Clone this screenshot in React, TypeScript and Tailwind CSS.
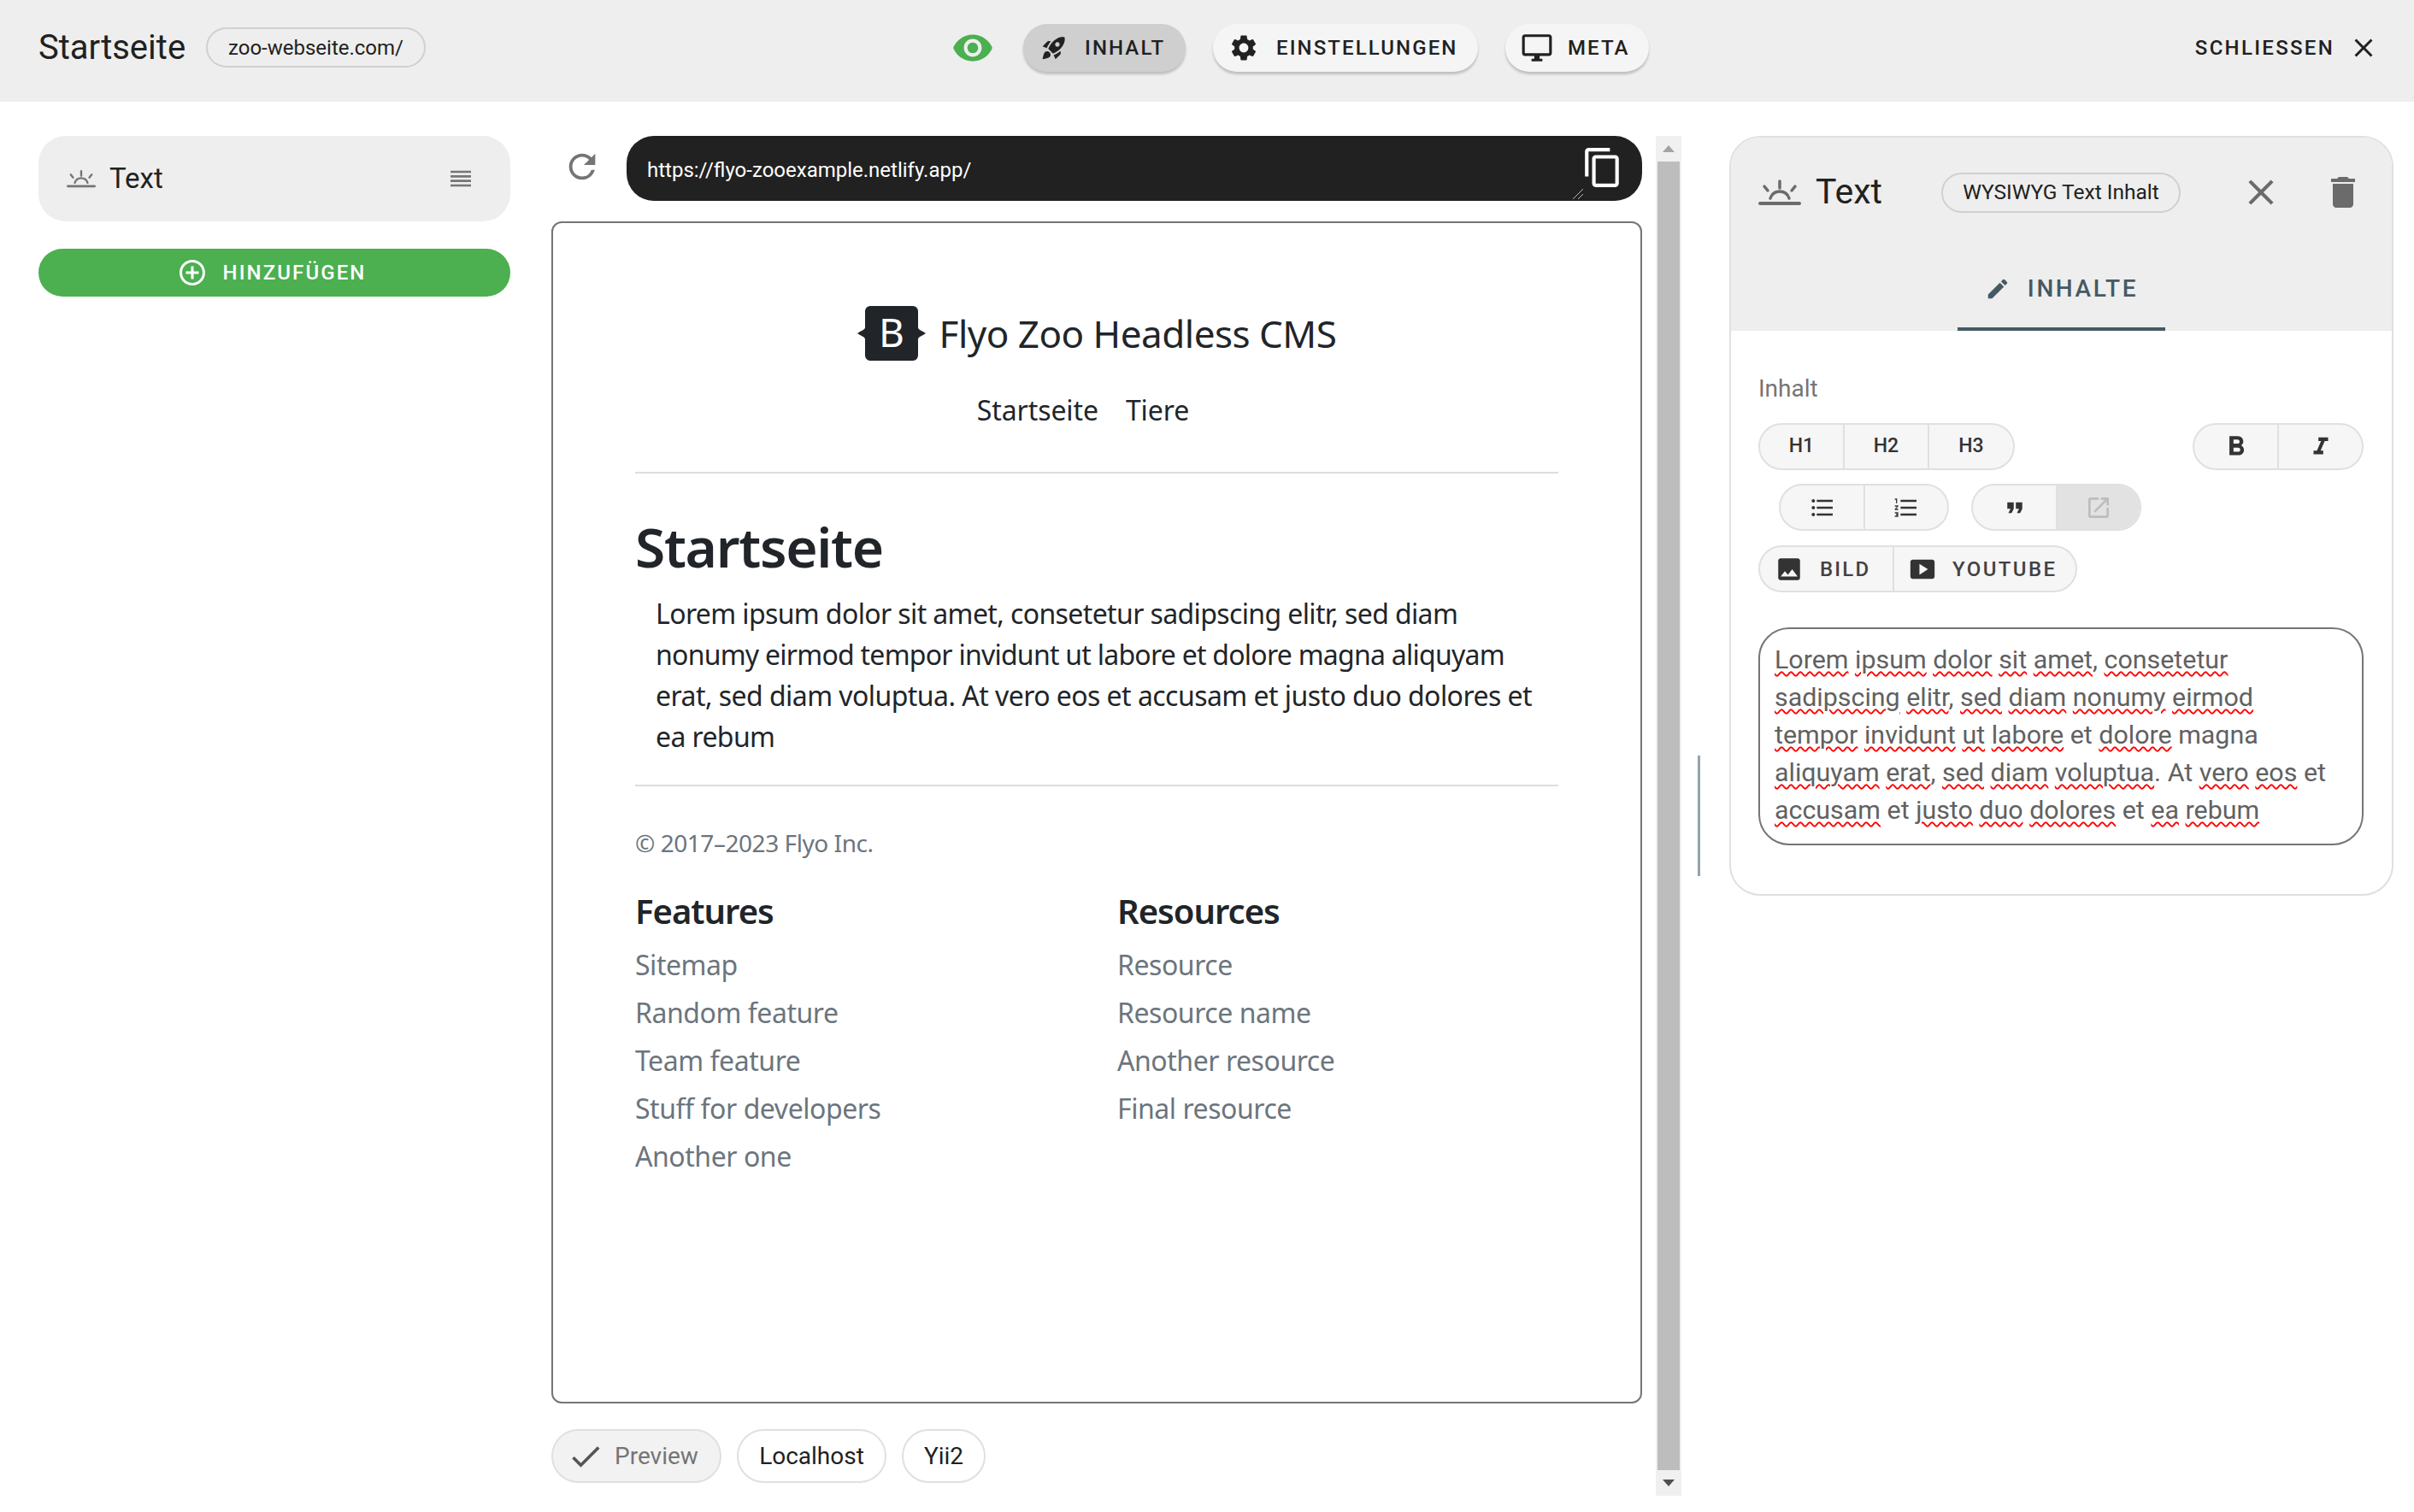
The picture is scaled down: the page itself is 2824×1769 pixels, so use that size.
import {
  MdAddCircleOutline,
  MdCheck,
  MdClose,
  MdContentCopy,
  MdDelete,
  MdEdit,
  MdFormatBold,
  MdFormatItalic,
  MdFormatListBulleted,
  MdFormatListNumbered,
  MdFormatQuote,
  MdImage,
  MdOpenInNew,
  MdOutlineDesktopWindows,
  MdRefresh,
  MdReorder,
  MdRocketLaunch,
  MdSettings,
  MdSmartDisplay,
  MdVisibility,
} from "react-icons/md";

const previewFont = "font-['Noto_Sans',sans-serif]";

function Twilight({ className }: { className: string }) {
  return (
    <svg viewBox="0 0 50 30" className={className} fill="none" stroke="currentColor" strokeLinecap="round">
      <path d="M2 28h46" strokeWidth="4" />
      <path d="M14 22c2-6 6-8 11-8s9 2 11 8" strokeWidth="3.5" />
      <path d="M25 2v8M7 8l4 5M43 8l-4 5" strokeWidth="3.5" />
    </svg>
  );
}

function BootstrapLogo() {
  return (
    <svg viewBox="0 0 80 64" className="w-[80px] h-[64px]">
      <path
        d="M9 6a6 6 0 0 1 6-6h50a6 6 0 0 1 6 6v19c0 3 5 4 9 7-4 3-9 4-9 7v19a6 6 0 0 1-6 6H15a6 6 0 0 1-6-6V39c0-3-5-4-9-7 4-3 9-4 9-7z"
        fill="#212529"
      />
      <text x="40" y="48" textAnchor="middle" fontSize="46" fontFamily="Noto Sans, sans-serif" fill="#fff">
        B
      </text>
    </svg>
  );
}

function NavButton({
  icon,
  label,
  active,
  width,
  gap,
}: {
  icon: React.ReactNode;
  label: string;
  active?: boolean;
  width: string;
  gap: string;
}) {
  return (
    <button
      className={`flex items-center h-[56px] rounded-full pl-[20px] text-[24px] font-medium tracking-[2.1px] text-[#212121] shadow-[0_3px_3px_rgba(0,0,0,0.2)] ${width} ${
        active ? "bg-[#cfcfcf]" : "bg-[#f5f5f5]"
      }`}
    >
      {icon}
      <span className={gap}>{label}</span>
    </button>
  );
}

function Group({ children, className }: { children: React.ReactNode; className?: string }) {
  return (
    <div className={`flex h-[55px] rounded-full border-2 border-[#e0e0e0] bg-[#f6f6f6] overflow-hidden ${className ?? ""}`}>
      {children}
    </div>
  );
}

function Seg({ children, last, className }: { children: React.ReactNode; last?: boolean; className?: string }) {
  return (
    <div
      className={`w-[99px] flex items-center justify-center text-[#333] text-[23px] font-medium ${
        last ? "" : "border-r-2 border-[#e0e0e0]"
      } ${className ?? ""}`}
    >
      {children}
    </div>
  );
}

const editorLines = [
  ["Lorem", "ipsum", "dolor", "sit", "amet", ",", "consetetur"],
  ["sadipscing", "elitr", ",", "sed", "diam", "nonumy", "eirmod"],
  ["tempor", "invidunt", "ut", "labore", "!et", "dolore", "!magna"],
  ["aliquyam", "erat", ",", "sed", "diam", "voluptua", ".", "!At", "vero", "eos", "!et"],
  ["accusam", "!et", "justo", "duo", "dolores", "!et", "ea", "rebum"],
];

function EditorLine({ words }: { words: string[] }) {
  return (
    <div className="whitespace-nowrap h-[44px] leading-[44px]">
      {words.map((w, i) => {
        const punct = w === "," || w === ".";
        const plain = w.startsWith("!");
        return (
          <span key={i}>
            {i > 0 && !punct ? " " : ""}
            {punct || plain ? (
              w.replace("!", "")
            ) : (
              <span className="underline decoration-wavy decoration-[#ff0000] decoration-[2px] underline-offset-[3px]">{w}</span>
            )}
          </span>
        );
      })}
    </div>
  );
}

function FooterColumn({ title, links }: { title: string; links: string[] }) {
  return (
    <div className="w-[564px] shrink-0">
      <div className="text-[40px] font-semibold text-[#212529] leading-[48px] tracking-[-1px]">{title}</div>
      <div className="mt-[11px] flex flex-col">
        {links.map((l) => (
          <div key={l} className="h-[56px] leading-[56px] text-[32px] text-[#6c757d] tracking-[-0.45px]">
            {l}
          </div>
        ))}
      </div>
    </div>
  );
}

export default function App() {
  return (
    <div className="w-[2824px] h-[1769px] overflow-hidden bg-white font-['Roboto',sans-serif] text-[#212121] flex flex-col">
      <header className="h-[119px] bg-[#eeeeee] flex items-center pl-[45px] pr-[41px] pb-[8px] shrink-0">
        <div className="text-[40px] w-[196px] whitespace-nowrap">Startseite</div>
        <div className="h-[47px] w-[257px] rounded-full border-2 border-[#d0d0d0] flex items-center justify-center text-[24px] whitespace-nowrap">
          zoo-webseite.com/
        </div>
        <MdVisibility className="ml-[615px] w-[50px] h-[50px] text-[#4caf50]" />
        <div className="ml-[34px] flex gap-[32px]">
          <NavButton width="w-[190px]" gap="ml-[20px]" active label="INHALT" icon={<MdRocketLaunch className="w-[32px] h-[32px]" />} />
          <NavButton width="w-[310px]" gap="ml-[20px]" label="EINSTELLUNGEN" icon={<MdSettings className="w-[36px] h-[36px] -ml-[2px]" />} />
          <NavButton width="w-[168px]" gap="ml-[17px]" label="META" icon={<MdOutlineDesktopWindows className="w-[38px] h-[38px] -ml-[2px]" />} />
        </div>
        <div className="ml-auto flex items-center text-[24px] font-medium tracking-[2.3px]">
          SCHLIESSEN
          <MdClose className="ml-[16px] w-[36px] h-[36px]" />
        </div>
      </header>

      <main className="flex flex-1 pt-[40px] min-h-0">
        <aside className="ml-[45px] w-[552px] shrink-0">
          <div className="h-[100px] rounded-[32px] bg-[#eeeeee] flex items-center pl-[33px] pr-[42px]">
            <Twilight className="w-[34px] h-[22px] text-[#757575]" />
            <span className="ml-[16px] text-[33px]">Text</span>
            <MdReorder className="ml-auto w-[32px] h-[32px] text-[#757575]" />
          </div>
          <button className="mt-[32px] w-full h-[56px] rounded-full bg-[#4caf50] text-white flex items-center justify-center pr-[7px] text-[24px] font-medium tracking-[2.1px]">
            <MdAddCircleOutline className="w-[36px] h-[36px]" />
            <span className="ml-[18px]">HINZUFÜGEN</span>
          </button>
        </aside>

        <section className="ml-[48px] w-[1276px] shrink-0">
          <div className="flex items-center h-[76px]">
            <MdRefresh className="ml-[13px] w-[46px] h-[46px] -mt-[5px] text-[#757575]" />
            <div className="relative ml-[29px] flex-1 h-[76px] rounded-[32px] bg-[#212121] text-white flex items-center pl-[24px] pt-[4px] text-[24px]">
              https://flyo-zooexample.netlify.app/
              <MdContentCopy className="absolute right-[21px] top-[12px] w-[50px] h-[50px]" />
              <svg viewBox="0 0 14 14" className="absolute right-[68px] bottom-[1px] w-[14px] h-[14px]" stroke="#bbb" strokeWidth="1">
                <path d="M1 13 13 1M7 13l6-6" />
              </svg>
            </div>
          </div>

          <div className={`mt-[24px] h-[1383px] rounded-[12px] border-2 border-[#757575] px-[96px] ${previewFont} text-[#212529]`}>
            <div className="pt-[97px] flex items-center justify-center gap-[16px]">
              <BootstrapLogo />
              <span className="text-[44px] leading-[64px] tracking-[-0.5px] whitespace-nowrap">Flyo Zoo Headless CMS</span>
            </div>
            <nav className="mt-[34px] pr-[32px] flex justify-center gap-[32px] text-[32px] leading-[48px] tracking-[-0.1px]">
              <span>Startseite</span>
              <span>Tiere</span>
            </nav>
            <div className="mt-[48px] border-t-2 border-[#dddddd]" />
            <h1 className="mt-[48px] text-[64px] leading-[76px] font-semibold tracking-[-1.3px]">Startseite</h1>
            <div className="mt-[16px] pl-[24px] text-[32px] leading-[48px] tracking-[-0.62px]">
              <p className="whitespace-nowrap">Lorem ipsum dolor sit amet, consetetur sadipscing elitr, sed diam</p>
              <p className="whitespace-nowrap tracking-[-0.75px]">nonumy eirmod tempor invidunt ut labore et dolore magna aliquyam</p>
              <p className="whitespace-nowrap tracking-[-0.55px]">erat, sed diam voluptua. At vero eos et accusam et justo duo dolores et</p>
              <p className="whitespace-nowrap">ea rebum</p>
            </div>
            <div className="mt-[32px] border-t-2 border-[#dddddd]" />
            <div className="mt-[46px] text-[28px] leading-[40px] text-[#6c757d] tracking-[-0.45px]">© 2017–2023 Flyo Inc.</div>
            <div className="mt-[36px] flex">
              <FooterColumn
                title="Features"
                links={["Sitemap", "Random feature", "Team feature", "Stuff for developers", "Another one"]}
              />
              <FooterColumn title="Resources" links={["Resource", "Resource name", "Another resource", "Final resource"]} />
            </div>
          </div>

          <div className="mt-[30px] flex gap-[18px] text-[28px]">
            <div className="h-[63px] w-[199px] rounded-full border-2 border-[#e0e0e0] bg-[#f2f2f2] flex items-center pl-[16px] text-[#757575]">
              <MdCheck className="w-[44px] h-[44px] text-[#555]" />
              <span className="ml-[12px]">Preview</span>
            </div>
            <div className="h-[63px] w-[175px] rounded-full border-2 border-[#e0e0e0] flex items-center justify-center">Localhost</div>
            <div className="h-[63px] w-[98px] rounded-full border-2 border-[#e0e0e0] flex items-center justify-center">Yii2</div>
          </div>
        </section>

        <div className="ml-[16px] w-[30px] h-[1591px] bg-[#f0f0f0] flex flex-col items-center shrink-0">
          <div className="h-[30px] flex items-center justify-center">
            <div className="w-0 h-0 border-x-[7px] border-x-transparent border-b-[8px] border-b-[#a3a3a3]" />
          </div>
          <div className="w-[26px] flex-1 bg-[#bdbdbd]" />
          <div className="h-[30px] flex items-center justify-center">
            <div className="w-0 h-0 border-x-[7px] border-x-transparent border-t-[8px] border-t-[#505050]" />
          </div>
        </div>

        <div className="ml-[19px] w-[3px] h-[141px] mt-[725px] bg-[#90a4ae] shrink-0" />

        <aside className="ml-[34px] w-[777px] h-[889px] shrink-0 rounded-[36px] border-2 border-[#e0e0e0] overflow-hidden">
          <div className="h-[226px] bg-[#eeeeee] flex flex-col">
            <div className="flex items-center h-[72px] mt-[28px] pl-[32px]">
              <Twilight className="w-[50px] h-[32px] text-[#6b6b6b]" />
              <span className="ml-[17px] text-[41px]">Text</span>
              <div className="ml-[69px] h-[47px] w-[280px] rounded-full border-2 border-[#d0d0d0] flex items-center justify-center text-[24.5px] whitespace-nowrap">
                WYSIWYG Text Inhalt
              </div>
              <MdClose className="ml-[69px] w-[50px] h-[50px] text-[#6b6b6b]" />
              <MdDelete className="ml-[47px] w-[48px] h-[48px] text-[#6b6b6b]" />
            </div>
            <div className="mt-auto flex justify-center">
              <div className="w-[243px] h-[96px] pt-[1px] border-b-[4px] border-[#455a64] text-[#455a64] flex items-center justify-center text-[28px] font-medium tracking-[2.6px]">
                <MdEdit className="w-[30px] h-[30px]" />
                <span className="ml-[20px]">INHALTE</span>
              </div>
            </div>
          </div>

          <div className="pt-[50px] px-[32px]">
            <div className="text-[28px] leading-[36px] text-[#757575]">Inhalt</div>
            <div className="mt-[22px] flex justify-between w-[708px]">
              <Group className="w-[300px]">
                <Seg>H1</Seg>
                <Seg>H2</Seg>
                <Seg last className="flex-1">H3</Seg>
              </Group>
              <Group className="w-[200px]">
                <Seg><MdFormatBold className="w-[38px] h-[38px]" /></Seg>
                <Seg last className="flex-1"><MdFormatItalic className="w-[34px] h-[34px]" /></Seg>
              </Group>
            </div>
            <div className="mt-[16px] ml-[24px] flex gap-[26px]">
              <Group className="w-[199px]">
                <Seg><MdFormatListBulleted className="w-[32px] h-[32px]" /></Seg>
                <Seg last className="flex-1"><MdFormatListNumbered className="w-[32px] h-[32px]" /></Seg>
              </Group>
              <Group className="w-[199px]">
                <Seg><MdFormatQuote className="w-[30px] h-[30px]" /></Seg>
                <Seg last className="flex-1 bg-[#e2e2e2]"><MdOpenInNew className="w-[32px] h-[32px] text-[#bdbdbd]" /></Seg>
              </Group>
            </div>
            <div className="mt-[17px]">
              <Group className="w-[373px]">
                <div className="w-[157px] border-r-2 border-[#e0e0e0] flex items-center pl-[17px] text-[24px] font-medium tracking-[2.2px] text-[#424242]">
                  <MdImage className="w-[34px] h-[34px] text-[#333]" />
                  <span className="ml-[19px]">BILD</span>
                </div>
                <div className="flex-1 flex items-center pl-[16px] text-[24px] font-medium tracking-[2.4px] text-[#424242]">
                  <MdSmartDisplay className="w-[34px] h-[34px] text-[#333]" />
                  <span className="ml-[18px]">YOUTUBE</span>
                </div>
              </Group>
            </div>
            <div className="mt-[41px] w-[708px] h-[255px] rounded-[36px] border-2 border-[#757575] pl-[17px] pt-[14px] text-[30.4px] text-[#616161]">
              {editorLines.map((l, i) => (
                <EditorLine key={i} words={l} />
              ))}
            </div>
          </div>
        </aside>
      </main>
    </div>
  );
}
